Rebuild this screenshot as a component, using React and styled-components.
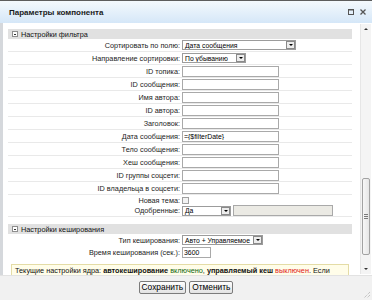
import React from 'react';
import styled, { createGlobalStyle } from 'styled-components';

const GlobalStyle = createGlobalStyle`
  html, body { margin: 0; padding: 0; }
  body {
    width: 372px;
    height: 300px;
    overflow: hidden;
    background: #fff;
    font-family: "Liberation Sans", Arial, sans-serif;
    color: #000;
  }
`;

const Dialog = styled.div`
  display: flex;
  flex-direction: column;
  width: 372px;
  height: 300px;
  box-sizing: border-box;
  border-top: 1px solid #5d5d5d;
`;

const TitleBar = styled.div`
  flex-shrink: 0;
  height: 22px;
  display: flex;
  align-items: center;
  padding: 0 6px 0 9px;
  background: linear-gradient(#f4f9fd, #d5e7f8);
`;

const Title = styled.div`
  font-size: 8px;
  font-weight: bold;
  color: #1a1a1a;
`;

const WindowButtons = styled.div`
  margin-left: auto;
  display: flex;
  align-items: center;
  gap: 6px;
`;

const Main = styled.div`
  flex: 1;
  min-height: 0;
  display: flex;
  border-left: 3px solid #d5d8dc;
`;

const Content = styled.div`
  flex: 1;
  overflow: hidden;
  padding: 6px 8px 0 5px;
  font-size: 7.3px;
`;

const SectionHead = styled.div`
  height: 10px;
  margin-top: ${p => p.$top || 0}px;
  display: flex;
  align-items: center;
  gap: 3px;
  padding-left: 4px;
  background: #e1e1e1;
  color: #111;
`;

const Toggle = styled.span`
  width: 6px;
  height: 6px;
  box-sizing: border-box;
  border: 1px solid #8e8e8e;
  background: #fff;
  display: flex;
  align-items: center;
  justify-content: center;
  &::after {
    content: '';
    width: 2px;
    height: 1px;
    background: #333;
  }
`;

const Row = styled.div`
  display: grid;
  grid-template-columns: 172px auto;
  column-gap: 2px;
  align-items: center;
  height: ${p => p.$h || 13}px;
  box-sizing: border-box;
  border-bottom: ${p => (p.$line ? '1px solid #e9e9e9' : 'none')};
`;

const Label = styled.div`
  text-align: right;
  white-space: nowrap;
  color: #1d1d1d;
`;

const Controls = styled.div`
  display: flex;
  align-items: center;
  gap: 2px;
`;

const SelectBox = styled.div`
  width: ${p => p.$w}px;
  height: 10px;
  box-sizing: border-box;
  border: 1px solid #9c9c9c;
  background: #fff;
  display: flex;
  align-items: center;
  justify-content: space-between;
  padding-left: 2px;
  font-size: 6.8px;
  white-space: nowrap;
  overflow: hidden;
`;

const DropButton = styled.span`
  flex-shrink: 0;
  width: 9px;
  height: 8px;
  box-sizing: border-box;
  border: 1px solid #8a8a8a;
  background: #ececec;
  display: flex;
  align-items: center;
  justify-content: center;
  &::after {
    content: '';
    border-left: 2px solid transparent;
    border-right: 2px solid transparent;
    border-top: 2px solid #000;
  }
`;

const TextInput = styled.input`
  width: ${p => p.$w}px;
  height: 11px;
  box-sizing: border-box;
  margin: 0;
  padding: 0 1px;
  border: 1px solid #a9a9a9;
  background: ${p => (p.disabled ? '#ebeae4' : '#fff')};
  font-family: inherit;
  font-size: 6.9px;
  color: #000;
  outline: none;
`;

const CheckBox = styled.span`
  width: 7px;
  height: 7px;
  box-sizing: border-box;
  border: 1px solid #a0a0a0;
  background: #f3f3f3;
`;

const Note = styled.div`
  margin: 5px 3px 0 3px;
  padding: 1px 3px;
  border: 1px solid #e4dca6;
  background: #fffde9;
  line-height: 9px;
  color: #111;
  b { font-weight: bold; }
`;

const On = styled.span`
  color: #116611;
`;

const Off = styled.span`
  color: #e01b1b;
`;

const ScrollBar = styled.div`
  width: 10px;
  margin: 1px 1px 1px 0;
  display: flex;
  flex-direction: column;
  background: #f4f4f4;
  border-left: 1px solid #e6e6e6;
`;

const ScrollArrow = styled.div`
  height: 10px;
  display: flex;
  align-items: center;
  justify-content: center;
  &::after {
    content: '';
    border-left: 2px solid transparent;
    border-right: 2px solid transparent;
    ${p => (p.$up ? 'border-bottom: 2px solid #333;' : 'border-top: 2px solid #333;')}
  }
`;

const Track = styled.div`
  flex: 1;
  padding-top: 144px;
`;

const Thumb = styled.div`
  height: 77px;
  margin: 0 1px;
  box-sizing: border-box;
  border: 1px solid #a2a2a2;
  border-radius: 2px;
  background: linear-gradient(90deg, #f7f7f7, #e6e6e6);
  display: flex;
  flex-direction: column;
  align-items: center;
  justify-content: center;
  gap: 1px;
`;

const Grip = styled.span`
  width: 4px;
  height: 1px;
  background: #7a7a7a;
`;

const Footer = styled.div`
  position: relative;
  flex-shrink: 0;
  height: 25px;
  box-sizing: border-box;
  border-top: 1px solid #e2e2e2;
  background: #f1f1f1;
  display: flex;
  justify-content: center;
  align-items: flex-start;
  gap: 3px;
  padding-top: 5px;
`;

const Button = styled.button`
  height: 13px;
  margin: 0;
  padding: 0 2px;
  box-sizing: border-box;
  border: 1px solid #7b7b7b;
  border-radius: 2px;
  background: linear-gradient(#fefefe, #e2e2e2);
  font-family: "Liberation Sans", Arial, sans-serif;
  font-size: 8.4px;
  line-height: 11px;
  color: #000;
`;

const ResizeGrip = styled.svg`
  position: absolute;
  right: 1px;
  bottom: 1px;
`;

const Select = ({ w, children }) => (
  <SelectBox $w={w}>
    <span>{children}</span>
    <DropButton />
  </SelectBox>
);

const inputRows = [
  ['ID топика:', ''],
  ['ID сообщения:', ''],
  ['Имя автора:', ''],
  ['ID автора:', ''],
  ['Заголовок:', ''],
  ['Дата сообщения:', '={$filterDate}'],
  ['Тело сообщения:', ''],
  ['Хеш сообщения:', ''],
  ['ID группы соцсети:', ''],
  ['ID владельца в соцсети:', ''],
];

export default function App() {
  return (
    <>
      <GlobalStyle />
      <Dialog>
        <TitleBar>
          <Title>Параметры компонента</Title>
          <WindowButtons>
            <svg width="6" height="6" viewBox="0 0 6 6">
              <rect x="0.5" y="0.5" width="5" height="5" fill="none" stroke="#555" />
              <line x1="0" y1="1" x2="6" y2="1" stroke="#555" />
            </svg>
            <svg width="6" height="6" viewBox="0 0 6 6">
              <path d="M0.5 0.5 L5.5 5.5 M5.5 0.5 L0.5 5.5" stroke="#555" strokeWidth="1.3" />
            </svg>
          </WindowButtons>
        </TitleBar>

        <Main>
          <Content>
            <SectionHead>
              <Toggle />
              Настройки фильтра
            </SectionHead>
            <Row $line>
              <Label>Сортировать по полю:</Label>
              <Controls>
                <Select w={114}>Дата сообщения</Select>
              </Controls>
            </Row>
            <Row $line>
              <Label>Направление сортировки:</Label>
              <Controls>
                <Select w={64}>По убыванию</Select>
              </Controls>
            </Row>
            {inputRows.map(([label, value]) => (
              <Row $line key={label}>
                <Label>{label}</Label>
                <Controls>
                  <TextInput $w={97} readOnly value={value} />
                </Controls>
              </Row>
            ))}
            <Row $h={10}>
              <Label>Новая тема:</Label>
              <Controls>
                <CheckBox />
              </Controls>
            </Row>
            <Row $h={12} $line>
              <Label>Одобренные:</Label>
              <Controls>
                <Select w={49}>Да</Select>
                <TextInput $w={100} disabled value="" />
              </Controls>
            </Row>

            <SectionHead $top={7}>
              <Toggle />
              Настройки кеширования
            </SectionHead>
            <Row $h={12}>
              <Label>Тип кеширования:</Label>
              <Controls>
                <Select w={81}>Авто + Управляемое</Select>
              </Controls>
            </Row>
            <Row $h={13}>
              <Label>Время кеширования (сек.):</Label>
              <Controls>
                <TextInput $w={29} readOnly value="3600" />
              </Controls>
            </Row>
            <Note>
              Текущие настройки ядра: <b>автокеширование</b> <On>включено</On>,{' '}
              <b>управляемый кеш</b> <Off>выключен</Off>. Если
            </Note>
          </Content>
          <ScrollBar>
            <ScrollArrow $up />
            <Track>
              <Thumb>
                <Grip />
                <Grip />
                <Grip />
              </Thumb>
            </Track>
            <ScrollArrow />
          </ScrollBar>
        </Main>

        <Footer>
          <Button>Сохранить</Button>
          <Button>Отменить</Button>
          <ResizeGrip width="9" height="9" viewBox="0 0 9 9">
            <path d="M8 2 L2 8 M8 5 L5 8" stroke="#b0b0b0" strokeWidth="1" strokeDasharray="1 1" />
          </ResizeGrip>
        </Footer>
      </Dialog>
    </>
  );
}
